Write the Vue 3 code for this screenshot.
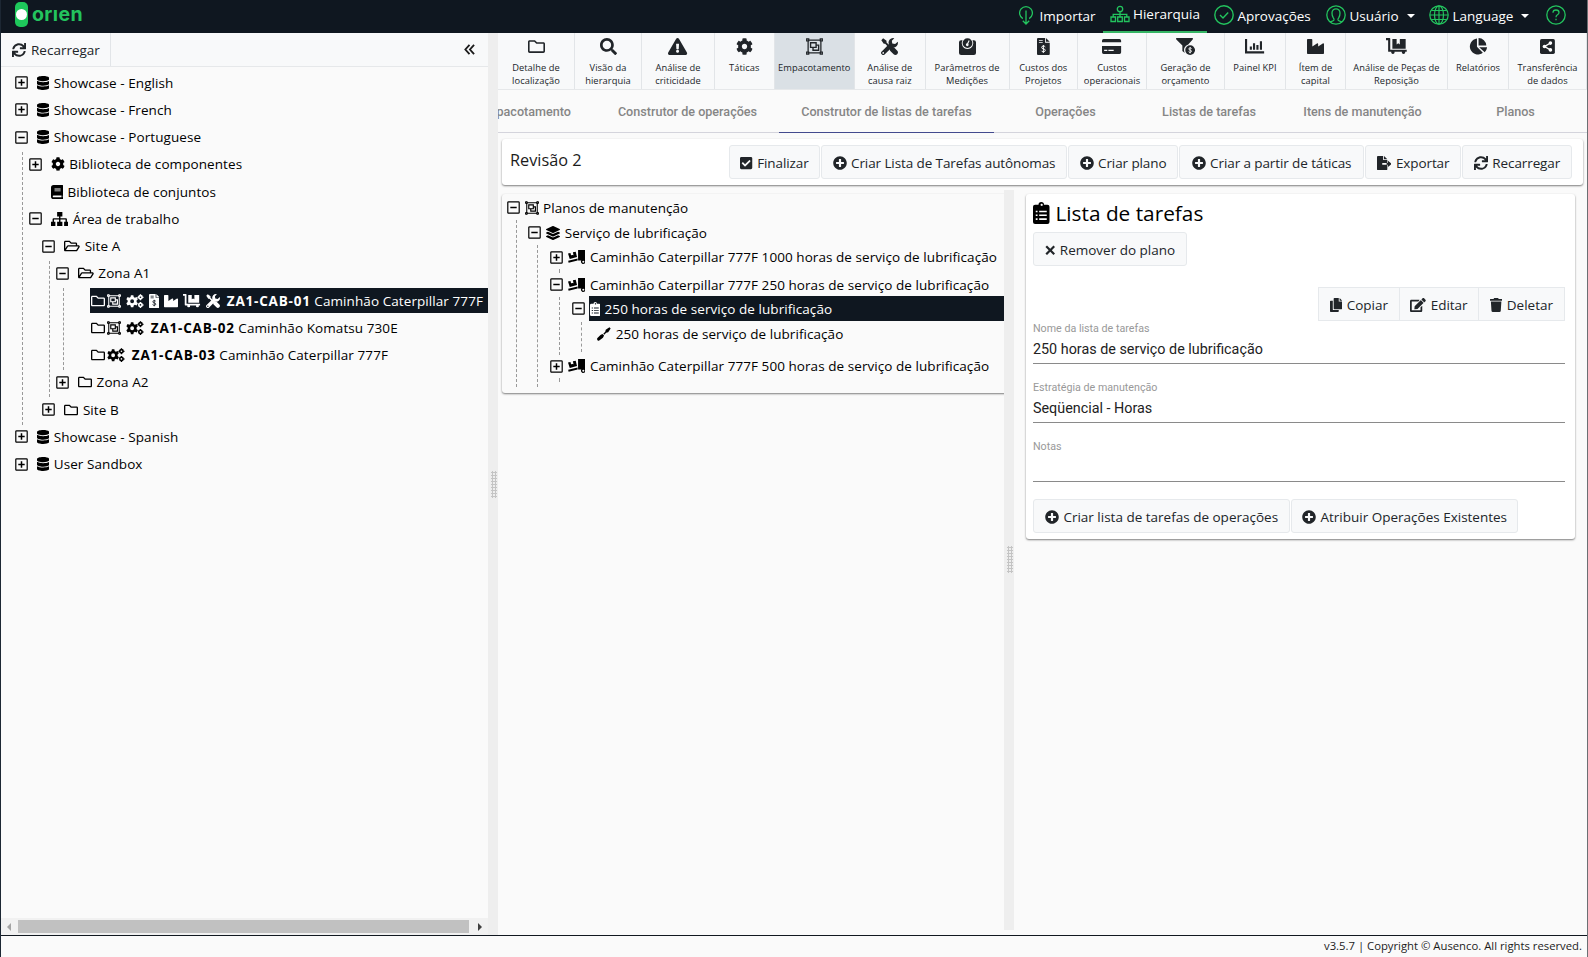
<script setup>
import { h, ref } from "vue"

// [width, height, markup] of every icon
const icons = {
  database: [448, 512, '<path d="M448 73.143v45.714C448 159.143 347.667 192 224 192S0 159.143 0 118.857V73.143C0 32.857 100.333 0 224 0s224 32.857 224 73.143zM448 176v102.857C448 319.143 347.667 352 224 352S0 319.143 0 278.857V176c48.125 33.143 136.208 48.572 224 48.572S399.874 209.143 448 176zm0 160v102.857C448 479.143 347.667 512 224 512S0 479.143 0 438.857V336c48.125 33.143 136.208 48.572 224 48.572S399.874 369.143 448 336z"/>'],
  plus: [512, 512, '<path d="M256 8C119 8 8 119 8 256s111 248 248 248 248-111 248-248S393 8 256 8zm144 276c0 6.6-5.4 12-12 12h-92v92c0 6.6-5.4 12-12 12h-56c-6.6 0-12-5.4-12-12v-92h-92c-6.6 0-12-5.4-12-12v-56c0-6.6 5.4-12 12-12h92v-92c0-6.6 5.4-12 12-12h56c6.6 0 12 5.4 12 12v92h92c6.6 0 12 5.4 12 12v56z"/>'],
  cog: [512, 512, '<path d="M487.4 315.7l-42.6-24.6c4.3-23.2 4.3-47 0-70.2l42.6-24.6c4.9-2.8 7.1-8.6 5.5-14-11.1-35.6-30-67.8-54.7-94.6-3.8-4.1-10-5.1-14.8-2.3L380.8 110c-17.9-15.4-38.5-27.3-60.8-35.1V25.8c0-5.6-3.9-10.5-9.4-11.7-36.7-8.2-74.3-7.8-109.2 0-5.5 1.2-9.4 6.1-9.4 11.7V75c-22.2 7.9-42.8 19.8-60.8 35.1L88.7 85.5c-4.9-2.8-11-1.9-14.8 2.3-24.7 26.7-43.6 58.9-54.7 94.6-1.7 5.4.6 11.2 5.5 14L67.3 221c-4.3 23.2-4.3 47 0 70.2l-42.6 24.6c-4.9 2.8-7.1 8.6-5.5 14 11.1 35.6 30 67.8 54.7 94.6 3.8 4.1 10 5.1 14.8 2.3l42.6-24.6c17.9 15.4 38.5 27.3 60.8 35.1v49.2c0 5.6 3.9 10.5 9.4 11.7 36.7 8.2 74.3 7.8 109.2 0 5.5-1.2 9.4-6.1 9.4-11.7v-49.2c22.2-7.9 42.8-19.8 60.8-35.1l42.6 24.6c4.9 2.8 11 1.9 14.8-2.3 24.7-26.7 43.6-58.9 54.7-94.6 1.5-5.5-.7-11.3-5.6-14.1zM256 336c-44.1 0-80-35.9-80-80s35.9-80 80-80 80 35.9 80 80-35.9 80-80 80z"/>'],
  cogs: [20, 16, '<path fill-rule="evenodd" d="M5.6 1.300h2.800l.4 2.200 1.300.7 2.100-.7 1.400 2.400-1.500 1.500v1.700l1.500 1.500-1.400 2.400-2.100-.7-1.300.7-.4 2.200H5.600l-.4-2.200-1.300-.7-2.100.7L.4 10.600l1.500-1.500V7.400L.4 5.900l1.400-2.400 2.100.7 1.300-.7zM7 6.100a2.200 2.200 0 1 0 0 4.400 2.200 2.200 0 0 0 0-4.400z"/><circle cx="16.500" cy="3.700" r="1.900" fill="none" stroke="currentColor" stroke-width="1.900"/><circle cx="16.500" cy="12.500" r="1.900" fill="none" stroke="currentColor" stroke-width="1.900"/><path d="M15.800.2h1.500v1.500h-1.500zM15.800 5.600h1.500v1.500h-1.500zM13 3h1.500v1.500H13zM18.500 3H20v1.500h-1.500zM15.800 9h1.500v1.500h-1.500zM15.800 14.400h1.500v1.500h-1.500zM18.500 11.800H20v1.500h-1.500z"/>'],
  book: [14, 16, '<path fill-rule="evenodd" d="M3 0h10q1 0 1 1v10.300q0 .5-.4.8-.3 1 0 1.900.4.200.4.700v.5q0 .8-.800.8H3q-3 0-3-3V3q0-3 3-3zM4 4v1h7V4zm0 2.200v1h7v-1zM3 12q-1 0-1 1t1 1h9v-2z"/>'],
  sitemap: [20, 16, '<path d="M7 0h6v5h-2.200v2H17q1.200 0 1.200 1.200V11H20v5h-5v-5h1.600V8.600h-5.800V11H13v5H7v-5h2.200V8.600H3.400V11H5v5H0v-5h1.800V8.200Q1.800 7 3 7h6.200V5H7z"/>'],
  folder: [512, 512, '<path d="M464 128H272l-54.63-54.63c-6-6-14.14-9.37-22.63-9.37H48C21.49 64 0 85.49 0 112v288c0 26.51 21.49 48 48 48h416c26.51 0 48-21.49 48-48V176c0-26.51-21.49-48-48-48zm0 272H48V112h140.12l54.63 54.63c6 6 14.14 9.37 22.63 9.37H464v224z"/>'],
  folderOpen: [576, 512, '<path fill-rule="evenodd" d="M527.9 224H480v-48c0-26.5-21.500-48-48-48H272l-64-64H48C21.500 64 0 85.500 0 112v288c0 26.500 21.500 48 48 48h400c16.500 0 31.900-8.500 40.700-22.600l79.900-128c20-31.900-3-73.400-40.700-73.400zM48 118c0-3.300 2.700-6 6-6h134.100l64 64H426c3.300 0 6 2.700 6 6v42H152c-16.800 0-32.400 8.800-41.100 23.200L48 351.400zm400 282H72l77.200-128H528z"/>'],
  group: [16, 16, '<g fill="none" stroke="currentColor"><path d="M2 2h12v12H2z" stroke-width="1.200"/><path d="M.6.8h2v2h-2zM13.400.8h2v2h-2zM.6 13.200h2v2h-2zM13.400 13.200h2v2h-2z" stroke-width="1.100"/><path d="M4.300 4.500h5.200v4.300H4.300z" stroke-width="1.300"/><path d="M9.500 6.700h2.400v4.800H6.600V8.800" stroke-width="1.300"/></g>'],
  search: [512, 512, '<path d="M505 442.7L405.3 343c-4.5-4.5-10.6-7-17-7H372c27.6-35.3 44-79.7 44-128C416 93.1 322.9 0 208 0S0 93.1 0 208s93.1 208 208 208c48.3 0 92.7-16.4 128-44v16.3c0 6.4 2.5 12.5 7 17l99.7 99.7c9.4 9.4 24.6 9.4 33.9 0l28.3-28.3c9.4-9.4 9.4-24.6.1-34zM208 336c-70.7 0-128-57.2-128-128 0-70.7 57.2-128 128-128 70.7 0 128 57.2 128 128 0 70.7-57.2 128-128 128z"/>'],
  warning: [576, 512, '<path d="M569.517 440.013C587.975 472.007 564.806 512 527.94 512H48.054c-36.937 0-59.999-40.055-41.577-71.987L246.423 23.985c18.467-32.009 64.72-31.951 83.154 0l239.94 416.028zM288 354c-25.405 0-46 20.595-46 46s20.595 46 46 46 46-20.595 46-46-20.595-46-46-46zm-43.673-165.346l7.418 136c.347 6.364 5.609 11.346 11.982 11.346h48.546c6.373 0 11.635-4.982 11.982-11.346l7.418-136c.375-6.874-5.098-12.654-11.982-12.654h-63.383c-6.884 0-12.356 5.78-11.981 12.654z"/>'],
  tools: [16, 16, '<path d="M.3 2 2 .3l3.200 2.400v1.500l2.900 2.900-1.300 1.300-2.900-2.900H2.600z"/><path d="M9.200 8.500c1-.6 2.400-.4 3.200.5l2.900 2.900q.7.700.7 1.600 0 1-.8 1.700-.7.700-1.700.7-.9 0-1.600-.7L9 12.400c-.9-.8-1.100-2.100-.6-3.200z"/><path fill-rule="evenodd" d="M15.800 3.500a4.300 4.300 0 0 1-5.400 5.200L3.600 15.400a1.900 1.900 0 0 1-2.900 0 1.900 1.900 0 0 1 0-2.800l6.700-6.700A4.300 4.300 0 0 1 12.500.2L10.200 2.600l.4 2.500 2.700.5zM2.100 13.200a.8.8 0 1 0 0 1.600.8.8 0 0 0 0-1.600z"/>'],
  weight: [16, 16, '<path fill-rule="evenodd" d="M2 2h1.300A5.500 5.500 0 0 0 8 10.300 5.500 5.500 0 0 0 12.700 2H14q2 0 2 2v10q0 2-2 2H2q-2 0-2-2V4q0-2 2-2z"/><path fill-rule="evenodd" d="M8 .2a4.600 4.600 0 1 1 0 9.200 4.600 4.600 0 0 1 0-9.200zm1.100 1.900L7.700 5a1.300 1.300 0 1 0 1 .4L10 2.500z"/>'],
  invoice: [12, 16, '<path fill-rule="evenodd" d="M1 0h6.600v4.400H12V15q0 1-1 1H1q-1 0-1-1V1q0-1 1-1zm.8 2v.8h3.600V2zm0 2v.8h3.600V4zM8.400 0 12 3.600H8.400z"/><path d="M7.800 8.400Q7.300 7.600 6 7.600q-1.600 0-1.600 1.200T6 10.200q1.800.2 1.800 1.400T6 13q-1.400 0-1.900-1M6 6.600v7.400" fill="none" class="cut" stroke-width=".9"/>'],
  card: [18, 16, '<path fill-rule="evenodd" d="M0 4V2.500Q0 1 1.500 1h15Q18 1 18 2.500V4zM0 7.500h18v6q0 1.500-1.500 1.500h-15Q0 15 0 13.500zM2 11v1.300h3V11zm4 0v1.300h5V11z"/>'],
  funnel: [18, 16, '<path d="M.5 0h15q.8.600.2 1.300L11.500 6A5.500 5.500 0 0 0 8.300 14L6 12.300V7L.3 1.300Q-.3.600.5 0z"/><path fill-rule="evenodd" d="M13.300 6.800a4.600 4.600 0 1 1 0 9.200 4.600 4.600 0 0 1 0-9.200z"/><path d="M14.700 10q-.4-.7-1.400-.7t-1.200.9 1.200 1.200 1.300 1.100-1.300 1-1.500-.7M13.300 8.500v6" fill="none" class="cut" stroke-width=".8"/>'],
  chart: [18, 16, '<path d="M0 1h2v11.500h16v2H0zM4.500 8h2v3h-2zM7.500 5h2v6h-2zM10.700 6.500h2v4.500h-2zM14 3h2v8h-2z"/>'],
  industry: [512, 512, '<path d="M475.115 163.781L336 252.309v-68.28c0-18.916-20.931-30.399-36.885-20.248L160 252.309V56c0-13.255-10.745-24-24-24H24C10.745 32 0 42.745 0 56v400c0 13.255 10.745 24 24 24h464c13.255 0 24-10.745 24-24V184.029c0-18.917-20.931-30.399-36.885-20.248z"/>'],
  dolly: [20, 16, '<path d="M0 0h3.400q.6 0 .6.600V11h15.500v2H18a1.600 1.600 0 1 1-3 0H8a1.600 1.600 0 1 1-3 0H2.600q-.6 0-.6-.6V2H0zM6 1h4v5l1.500-1L13 6V1h5.500v9H6z"/>'],
  pie: [17, 16, '<path d="M7.500.5V8.300l5.500 5.500A7.500 7.500 0 1 1 7.500.5zM9 0a7.500 7.500 0 0 1 7.300 7H9zM9.600 8.600H17a7.500 7.500 0 0 1-2.200 4.900z"/>'],
  share: [14, 16, '<path fill-rule="evenodd" d="M1.500 1h11Q14 1 14 2.500v11q0 1.500-1.500 1.500h-11Q0 15 0 13.500v-11Q0 1 1.500 1z"/><path d="M9.700 4.800 4.300 8l5.400 3.200" fill="none" class="cut" stroke-width="1.200"/><g class="hole"><circle cx="9.800" cy="4.800" r="1.700"/><circle cx="4.200" cy="8" r="1.700"/><circle cx="9.800" cy="11.200" r="1.700"/></g>'],
  check: [448, 512, '<path d="M400 480H48c-26.51 0-48-21.49-48-48V80c0-26.51 21.49-48 48-48h352c26.51 0 48 21.49 48 48v352c0 26.51-21.49 48-48 48zm-204.686-98.059l184-184c6.248-6.248 6.248-16.379 0-22.627l-22.627-22.627c-6.248-6.248-16.379-6.249-22.628 0L184 302.745l-70.059-70.059c-6.248-6.248-16.379-6.248-22.628 0l-22.627 22.627c-6.248 6.248-6.248 16.379 0 22.627l104 104c6.249 6.25 16.379 6.25 22.628.001z"/>'],
  sync: [512, 512, '<path d="M440.65 12.57l4 82.77A247.16 247.16 0 0 0 255.83 8C134.73 8 33.91 94.92 12.29 209.82A12 12 0 0 0 24.09 224h49.05a12 12 0 0 0 11.67-9.26 175.91 175.91 0 0 1 317-56.94l-101.46-4.86a12 12 0 0 0-12.57 12v47.41a12 12 0 0 0 12 12H500a12 12 0 0 0 12-12V12a12 12 0 0 0-12-12h-47.37a12 12 0 0 0-11.98 12.57zM255.83 432a175.61 175.61 0 0 1-146-77.8l101.8 4.87a12 12 0 0 0 12.57-12v-47.4a12 12 0 0 0-12-12H12a12 12 0 0 0-12 12V500a12 12 0 0 0 12 12h47.35a12 12 0 0 0 12-12.6l-4.15-82.57A247.17 247.17 0 0 0 255.83 504c121.11 0 221.93-86.92 243.55-201.82a12 12 0 0 0-11.8-14.18h-49.05a12 12 0 0 0-11.67 9.26A175.86 175.86 0 0 1 255.83 432z"/>'],
  export: [17, 16, '<path fill-rule="evenodd" d="M1 0h6v4.500h4.800V8H6v2h5.800v5q0 1-1 1H1q-1 0-1-1V1q0-1 1-1zM8 0l3.800 3.700H8zM12.500 5.500 17 9l-4.500 3.500V10H11V8h1.500z"/>'],
  layers: [512, 512, '<path d="M12.41 148.02l232.94 105.67c6.8 3.09 14.49 3.09 21.29 0l232.94-105.67c16.55-7.51 16.55-32.52 0-40.03L266.65 2.31a25.607 25.607 0 0 0-21.29 0L12.41 107.98c-16.55 7.51-16.55 32.53 0 40.04zm487.18 88.28l-58.09-26.33-161.64 73.27c-7.56 3.43-15.59 5.17-23.86 5.17s-16.29-1.74-23.86-5.17L70.51 209.97l-58.1 26.33c-16.55 7.5-16.55 32.5 0 40l232.94 105.59c6.8 3.08 14.49 3.08 21.29 0L499.59 276.3c16.55-7.5 16.55-32.5 0-40zm0 127.8l-57.87-26.23-161.86 73.37c-7.56 3.43-15.59 5.17-23.86 5.17s-16.29-1.74-23.86-5.17L70.29 337.87 12.41 364.1c-16.55 7.5-16.55 32.5 0 40l232.94 105.59c6.8 3.08 14.49 3.08 21.29 0L499.59 404.1c16.55-7.5 16.55-32.5 0-40z"/>'],
  truck: [20, 16, '<path fill-rule="evenodd" d="M11.500 0H20v13.500a2.600 2.600 0 1 1-4.800-1.500h-3.700zm6 12.300a1.200 1.200 0 1 0 0 2.400 1.200 1.200 0 0 0 0-2.400zM0 4l2.800-.7.700 2.800 1.600-.5 1.200.4-.7-3.400L8.800 2l1.500 6L2 10.200zM.2 12.200l10.800-2.600v2.300L.7 14.500z"/>'],
  clipboard: [12, 16, '<path fill-rule="evenodd" d="M10.500 2H8a2 2 0 0 0-4 0H1.500Q0 2 0 3.500v11Q0 16 1.500 16h9q1.500 0 1.500-1.500v-11Q12 2 10.500 2zM6 1.300a.8.8 0 1 1 0 1.500.8.8 0 0 1 0-1.500zM2 6.300v1.200h1.300V6.300zm2.500 0v1.100H10V6.300zM2 9v1.200h1.300V9zm2.500 0v1.100H10V9zM2 11.900v1.200h1.300v-1.200zm2.500 0V13H10v-1.100z"/>'],
  driver: [16, 16, '<path d="M15.600 1.800 14.200.4 10 3.200l-.6 2.300-2.200 2.200 1.100 1.100 2.200-2.200 2.300-.6zM6.200 7.900 4 9 .5 12.700q-.9 1.200.1 2.300 1.100 1.100 2.400.2L6.800 12.200l1.300-2.400z"/>'],
  times: [12, 16, '<path d="M2.300 2.800 6 6.500l3.700-3.700 1.800 1.800L7.800 8.300l3.700 3.700-1.800 1.800L6 10.100l-3.700 3.700L.5 12l3.700-3.700L.5 4.600z"/>'],
  copy: [14, 16, '<path d="M5 0h5v4h4v8q0 .8-.8.800H5q-.8 0-.8-.8V.8Q4.200 0 5 0zM11 0l3 3h-3zM.8 3h2.400v10q0 .8.800.8h6v1.400q0 .8-.8.800H.8Q0 16 0 15.200V3.800Q0 3 .8 3z"/>'],
  edit: [576, 512, '<path d="M402.6 83.2l90.2 90.2c3.8 3.8 3.8 10 0 13.8L274.4 405.6l-92.8 10.3c-12.4 1.4-22.9-9.1-21.5-21.5l10.3-92.8L388.8 83.2c3.8-3.8 10-3.8 13.8 0zm162-22.9l-48.8-48.8c-15.2-15.2-39.9-15.2-55.2 0l-35.4 35.4c-3.8 3.8-3.8 10 0 13.8l90.2 90.2c3.8 3.8 10 3.8 13.8 0l35.4-35.4c15.2-15.3 15.2-40 0-55.2zM384 346.2V448H64V128h229.8c3.2 0 6.2-1.3 8.5-3.5l40-40c7.6-7.6 2.2-20.5-8.5-20.5H48C21.5 64 0 85.5 0 112v352c0 26.5 21.5 48 48 48h352c26.5 0 48-21.5 48-48V306.2c0-10.7-12.9-16-20.5-8.5l-40 40c-2.2 2.3-3.500 5.300-3.500 8.500z"/>'],
  trash: [14, 16, '<path d="M.5 1H4l.8-1h4.400l.8 1h3.500q.5 0 .5.500V3H0V1.500Q0 1 .5 1zM1 4h12l-.7 10.600q-.1 1.400-1.500 1.400H3.200q-1.400 0-1.500-1.400z"/>'],
  angles: [12, 12, '<path d="M6 1 1.500 6 6 11M11 1 6.500 6 11 11" fill="none" stroke="currentColor" stroke-width="2"/>'],
  expand: [13, 13, '<g fill="none" stroke="currentColor"><rect x=".8" y=".8" width="11.400" height="11.400" rx=".8" stroke-width="1.200"/><path d="M3.300 6.500h6.400M6.500 3.300v6.400" stroke-width="1.500"/></g>'],
  collapse: [13, 13, '<g fill="none" stroke="currentColor"><rect x=".8" y=".8" width="11.400" height="11.400" rx=".8" stroke-width="1.200"/><path d="M3.300 6.500h6.400" stroke-width="1.500"/></g>'],
  navImport: [14, 20, '<path d="M3.800 13.600A6.400 6.400 0 1 1 10.200 13.600M7 5.500v13M3.800 15.800 7 19l3.200-3.200" fill="none" stroke="currentColor" stroke-width="1.300"/>'],
  navTree: [20, 18, '<g fill="none" stroke="currentColor" stroke-width="1.300"><circle cx="10" cy="4" r="2.700"/><path d="M1 12h4.500v4.500H1zM7.700 12h4.600v4.500H7.700zM14.500 12H19v4.500h-4.500zM10 6.700V12M3.200 12V9.300h13.600V12"/></g>'],
  navCheck: [20, 20, '<g fill="none" stroke="currentColor" stroke-width="1.400"><circle cx="10" cy="10" r="9.200"/><path d="m6 10 3 3 5.200-5.500"/></g>'],
  navUser: [20, 20, '<g fill="none" stroke="currentColor" stroke-width="1.300"><circle cx="10" cy="10" r="9.200"/><path d="M4 16.800q3.500-.6 4-1.800.2-1-.8-2.300Q6 11 6 8a4 4.200 0 0 1 8 0q0 3-1.200 4.700-1 1.300-.8 2.300.5 1.200 4 1.800"/></g>'],
  navGlobe: [20, 20, '<g fill="none" stroke="currentColor" stroke-width="1.200"><circle cx="10" cy="10" r="9.200"/><ellipse cx="10" cy="10" rx="4.500" ry="9.200"/><path d="M10 1v18M1 10h18M2.500 5.500h15M2.500 14.500h15"/></g>'],
  navHelp: [20, 20, '<g fill="none" stroke="currentColor" stroke-width="1.300"><circle cx="10" cy="10" r="9.200"/><path d="M7 7.800Q7 5 10 5t3 2.600q0 1.300-1.500 2.200T10 12.200M10 13.800v1.500"/></g>'],
}

const Icon = (props) => {
  const [w, hgt, body] = icons[props.name]
  return h("svg", {
    viewBox: `0 0 ${w} ${hgt}`,
    height: props.size,
    width: (props.size * w) / hgt,
    fill: "currentColor",
    innerHTML: body,
  })
}
Icon.props = ["name", "size"]

const nav = [
  { icon: "navImport", text: "Importar" },
  { icon: "navTree", text: "Hierarquia", active: true },
  { icon: "navCheck", text: "Aprovações" },
  { icon: "navUser", text: "Usuário", caret: true },
  { icon: "navGlobe", text: "Language", caret: true },
  { icon: "navHelp" },
]

const modules = [
  { icon: "folder", lines: ["Detalhe de", "localização"] },
  { icon: "search", lines: ["Visão da", "hierarquia"] },
  { icon: "warning", lines: ["Análise de", "criticidade"] },
  { icon: "cog", lines: ["Táticas"] },
  { icon: "group", lines: ["Empacotamento"] },
  { icon: "tools", lines: ["Análise de", "causa raiz"] },
  { icon: "weight", lines: ["Parâmetros de", "Medições"] },
  { icon: "invoice", lines: ["Custos dos", "Projetos"] },
  { icon: "card", lines: ["Custos", "operacionais"] },
  { icon: "funnel", lines: ["Geração de", "orçamento"] },
  { icon: "chart", lines: ["Painel KPI"] },
  { icon: "industry", lines: ["Ítem de", "capital"] },
  { icon: "dolly", lines: ["Análise de Peças de", "Reposição"] },
  { icon: "pie", lines: ["Relatórios"] },
  { icon: "share", lines: ["Transferência", "de dados"] },
]
const activeModule = ref("Empacotamento")

const tabs = [
  "pacotamento",
  "Construtor de operações",
  "Construtor de listas de tarefas",
  "Operações",
  "Listas de tarefas",
  "Itens de manutenção",
  "Planos",
]
const activeTab = ref(2)

const actions = [
  { icon: "check", text: "Finalizar" },
  { icon: "plus", text: "Criar Lista de Tarefas autônomas" },
  { icon: "plus", text: "Criar plano" },
  { icon: "plus", text: "Criar a partir de táticas" },
  { icon: "export", text: "Exportar" },
  { icon: "sync", text: "Recarregar" },
]

const sideTree = [
  { level: 0, box: "expand", icons: ["database"], text: "Showcase - English" },
  { level: 0, box: "expand", icons: ["database"], text: "Showcase - French" },
  { level: 0, box: "collapse", icons: ["database"], text: "Showcase - Portuguese" },
  { level: 1, box: "expand", icons: ["cog"], text: "Biblioteca de componentes" },
  { level: 1, icons: ["book"], text: "Biblioteca de conjuntos" },
  { level: 1, box: "collapse", icons: ["sitemap"], text: "Área de trabalho" },
  { level: 2, box: "collapse", icons: ["folderOpen"], text: "Site A" },
  { level: 3, box: "collapse", icons: ["folderOpen"], text: "Zona A1" },
  { level: 4, icons: ["folder", "group", "cogs", "invoice", "industry", "dolly", "tools"], code: "ZA1-CAB-01", text: "Caminhão Caterpillar 777F", selected: true },
  { level: 4, icons: ["folder", "group", "cogs"], code: "ZA1-CAB-02", text: "Caminhão Komatsu 730E" },
  { level: 4, icons: ["folder", "cogs"], code: "ZA1-CAB-03", text: "Caminhão Caterpillar 777F" },
  { level: 3, box: "expand", icons: ["folder"], text: "Zona A2" },
  { level: 2, box: "expand", icons: ["folder"], text: "Site B" },
  { level: 0, box: "expand", icons: ["database"], text: "Showcase - Spanish" },
  { level: 0, box: "expand", icons: ["database"], text: "User Sandbox" },
]
// dashed connectors: [left, top, height] inside the tree
const sideGuides = [[21, 85, 273], [48, 194, 136], [62, 221, 82]]

const planTree = [
  { level: 0, box: "collapse", icon: "group", text: "Planos de manutenção", height: 25 },
  { level: 1, box: "collapse", icon: "layers", text: "Serviço de lubrificação", height: 24.5 },
  { level: 2, box: "expand", icon: "truck", text: "Caminhão Caterpillar 777F 1000 horas de serviço de lubrificação", height: 27.5 },
  { level: 2, box: "collapse", icon: "truck", text: "Caminhão Caterpillar 777F 250 horas de serviço de lubrificação", height: 24 },
  { level: 3, box: "collapse", icon: "clipboard", text: "250 horas de serviço de lubrificação", height: 25, selected: true },
  { level: 4, icon: "driver", text: "250 horas de serviço de lubrificação", height: 32.5 },
  { level: 2, box: "expand", icon: "truck", text: "Caminhão Caterpillar 777F 500 horas de serviço de lubrificação", height: 39 },
]
const planGuides = [[14, 26, 167], [35, 51, 142], [57, 75, 4], [57, 103, 58], [57, 184, 4], [79, 128, 30]]

const fields = [
  { label: "Nome da lista de tarefas", value: "250 horas de serviço de lubrificação" },
  { label: "Estratégia de manutenção", value: "Seqüencial - Horas" },
  { label: "Notas", value: "" },
]
</script>

<template>
  <div class="app">
    <header class="topbar">
      <div class="logo">
        <svg width="13" height="25" viewBox="0 0 13 25">
          <rect width="13" height="25" rx="5" fill="#1ec95b" />
          <circle cx="6.500" cy="12.500" r="5.500" fill="#fff" />
        </svg>
        <span>orıen</span>
      </div>
      <nav class="nav">
        <a v-for="item in nav" :key="item.icon" class="nav-item" :class="{ active: item.active }">
          <Icon :name="item.icon" :size="item.active ? 18 : 20" class="nav-icon" />
          <span v-if="item.text">{{ item.text }}</span>
          <i v-if="item.caret" class="caret"></i>
        </a>
      </nav>
    </header>

    <div class="body">
      <aside class="sidebar">
        <div class="side-head">
          <button class="reload"><Icon name="sync" :size="14" />Recarregar</button>
          <Icon name="angles" :size="11" class="hide" />
        </div>
        <div class="side-tree">
          <div
            v-for="row in sideTree"
            :key="row.code || row.text"
            class="side-row"
            :style="{ paddingLeft: 14 + row.level * 13.7 + 'px' }"
          >
            <Icon v-if="row.box" :name="row.box" :size="13" class="box" />
            <span v-else-if="row.level < 4" class="box-space"></span>
            <span v-else class="leaf-space"></span>
            <span class="node" :class="{ selected: row.selected, leaf: row.code }">
              <Icon v-for="i in row.icons" :key="i" :name="i" :size="14" :class="'i-' + i" />
              <span class="label"><b v-if="row.code">{{ row.code }}</b> {{ row.text }}</span>
            </span>
          </div>
          <i
            v-for="g in sideGuides"
            :key="g[0]"
            class="guide"
            :style="{ left: g[0] + 'px', top: g[1] + 'px', height: g[2] + 'px' }"
          ></i>
        </div>
        <div class="scrollbar"><i class="arrow left"></i><i class="thumb"></i><i class="arrow right"></i></div>
      </aside>

      <div class="gutter first"><i class="grip"></i></div>

      <main class="main">
        <div class="modules">
          <button
            v-for="m in modules"
            :key="m.icon"
            class="module"
            :class="{ active: m.lines[0] === activeModule }"
          >
            <Icon :name="m.icon" :size="17" />
            <span v-for="line in m.lines" :key="line">{{ line }}</span>
          </button>
        </div>

        <div class="tabs">
          <a v-for="(t, i) in tabs" :key="t" class="tab" :class="{ active: i === activeTab }">{{ t }}</a>
        </div>

        <section class="card revision">
          <h2>Revisão 2</h2>
          <div class="actions">
            <button v-for="a in actions" :key="a.text" class="btn">
              <Icon :name="a.icon" :size="14" /><span>{{ a.text }}</span>
            </button>
          </div>
        </section>

        <div class="split">
          <div class="plan-col">
            <div class="plan-tree">
              <div
                v-for="(row, i) in planTree"
                :key="i"
                class="plan-row"
                :style="{ paddingLeft: 4.5 + row.level * 21.7 + 'px', height: row.height + 'px' }"
              >
                <Icon v-if="row.box" :name="row.box" :size="13" class="box" />
                <span class="plan-node" :class="[{ selected: row.selected }, 'n-' + row.icon]">
                  <Icon :name="row.icon" :size="14" />
                  <span class="label">{{ row.text }}</span>
                </span>
              </div>
              <i
                v-for="(g, i) in planGuides"
                :key="i"
                class="guide"
                :style="{ left: g[0] + 'px', top: g[1] + 'px', height: g[2] + 'px' }"
              ></i>
            </div>
          </div>

          <div class="gutter second"><i class="grip"></i></div>

          <section class="card detail">
            <h1><Icon name="clipboard" :size="22" />Lista de tarefas</h1>
            <div class="remove"><button class="btn"><Icon name="times" :size="14" /><span>Remover do plano</span></button></div>
            <div class="edit-group">
              <button class="btn"><Icon name="copy" :size="14" /><span>Copiar</span></button>
              <button class="btn"><Icon name="edit" :size="14" /><span>Editar</span></button>
              <button class="btn"><Icon name="trash" :size="14" /><span>Deletar</span></button>
            </div>
            <div v-for="f in fields" :key="f.label" class="field">
              <label>{{ f.label }}</label>
              <div class="value">{{ f.value }}</div>
            </div>
            <div class="bottom-actions">
              <button class="btn"><Icon name="plus" :size="14" /><span>Criar lista de tarefas de operações</span></button>
              <button class="btn"><Icon name="plus" :size="14" /><span>Atribuir Operações Existentes</span></button>
            </div>
          </section>
        </div>
      </main>
    </div>

    <footer class="footer">v3.5.7 | Copyright © Ausenco. All rights reserved.</footer>
  </div>
</template>

<style>
body {
  margin: 0;
  background: #fafafa;
}
svg .cut {
  stroke: #fff;
}
svg .hole {
  fill: #fff;
}
.selected svg .cut {
  stroke: #0f1720;
}
</style>

<style scoped>
* {
  box-sizing: border-box;
}
.app {
  width: 1588px;
  height: 957px;
  display: flex;
  flex-direction: column;
  overflow: hidden;
  background: #fafafa;
  border-left: 1px solid #1c2733;
  border-right: 1px solid #6b6f73;
  color: #1c1c1c;
  font-family: "Segoe UI", "Open Sans", "Noto Sans", sans-serif;
  font-size: 13.5px;
}
svg {
  flex: none;
  display: block;
}
button {
  font: inherit;
  color: #212529;
  margin: 0;
}

/* top bar */
.topbar {
  height: 33px;
  flex: none;
  display: flex;
  justify-content: space-between;
  background: #0f1720;
  padding-left: 14px;
}
.logo {
  display: flex;
  gap: 4px;
  padding-top: 2px;
  color: #23c45e;
  font-family: "Inter", sans-serif;
  font-weight: 700;
  font-size: 19.500px;
  letter-spacing: 0.4px;
  line-height: 24px;
}
.nav {
  display: grid;
  grid-template-columns: 84px 111px 112px 103px 117px 41.500px;
  color: #fff;
  font-size: 13.5px;
}
.nav-item {
  display: flex;
  align-items: center;
  height: 33px;
  padding-bottom: 2px;
  white-space: nowrap;
}
.nav-item .nav-icon {
  margin-right: 4px;
  margin-top: -1px;
  color: #23c45e;
}
.nav-item:first-child .nav-icon {
  margin-right: 7px;
}
.nav-item.active {
  width: 104px;
  padding: 0 0 3px 7px;
  border-bottom: 2px solid #35b564;
}
.nav-item.active .nav-icon {
  margin-right: 3.500px;
}
.caret {
  margin-left: 8px;
  border: 4.500px solid transparent;
  border-top-color: #fff;
  border-bottom: 0;
}

/* layout */
.body {
  height: 902px;
  flex: none;
  display: flex;
}
.sidebar {
  width: 487px;
  flex: none;
  display: flex;
  flex-direction: column;
}
.gutter {
  width: 10px;
  flex: none;
  background: #eee;
  display: flex;
  justify-content: center;
}
.grip {
  width: 6px;
  height: 27px;
  margin-left: 1px;
  background-image: radial-gradient(circle, #c4c4c4 1px, transparent 1.200px);
  background-size: 3px 3px;
}
.first .grip {
  margin-top: 438px;
}
.second {
  height: 740px;
}
.second .grip {
  margin-top: 356px;
}
.main {
  width: 1089px;
  display: flex;
  flex-direction: column;
  overflow: hidden;
}

/* sidebar */
.side-head {
  height: 34px;
  flex: none;
  display: flex;
  align-items: center;
  justify-content: space-between;
  background: #f8f9fa;
  border-bottom: 1px solid #e6e8ea;
  padding-right: 13px;
}
.reload {
  width: 110px;
  height: 33px;
  display: flex;
  align-items: center;
  gap: 5px;
  padding: 0 0 0 11px;
  border: 0;
  border-right: 1px solid #e2e5e8;
  background: none;
}
.side-tree {
  position: relative;
  flex: 1;
  padding-top: 2px;
}
.side-row {
  height: 27.250px;
  display: flex;
  align-items: center;
  white-space: nowrap;
  letter-spacing: 0.08px;
}
.side-row b {
  letter-spacing: 0.8px;
}
.box {
  color: #000;
  margin-right: 9px;
}
.box-space {
  width: 22px;
}
.leaf-space {
  width: 20.500px;
}
.node {
  display: flex;
  align-items: center;
  height: 25px;
  gap: 4.500px;
  color: #000;
}
.leaf {
  flex: 1;
  gap: 5px;
  padding-left: 1px;
}
.leaf .i-folder {
  margin-right: -3px;
}
.leaf .label {
  margin-left: 2px;
}
.selected {
  background: #0f1720;
  color: #fff;
}
.guide {
  position: absolute;
  width: 0;
  border-left: 1px dashed #999;
}
.scrollbar {
  height: 17px;
  display: flex;
  align-items: center;
  background: #f1f1f1;
  padding: 0 6px;
}
.thumb {
  width: 451px;
  height: 13px;
  margin: 0 9px 0 7px;
  background: #c1c1c1;
}
.arrow {
  border: 4px solid transparent;
}
.arrow.left {
  border-right-color: #a3a3a3;
  border-left: 0;
}
.arrow.right {
  border-left-color: #404040;
  border-right: 0;
}

/* module toolbar */
.modules {
  height: 57px;
  flex: none;
  display: grid;
  grid-template-columns: 77px 67px 73px 59.500px 80.500px 70.500px 84px 68.500px 69px 78px 61px 60px 102px 61px 78px;
  background: #f8f9fa;
  border-bottom: 1px solid #e6e8ea;
}
.module {
  display: flex;
  flex-direction: column;
  align-items: center;
  padding: 5px 0 0;
  border: 0;
  border-right: 1px solid #e2e5e8;
  background: none;
  font-size: 9.300px;
  letter-spacing: 0.07px;
  line-height: 13px;
  white-space: nowrap;
}
.module svg {
  margin-bottom: 6px;
}
.module.active {
  background: #dae0e5;
}

/* tabs */
.tabs {
  height: 43px;
  flex: none;
  display: grid;
  grid-template-columns: 98px 183px 215px 143px 144px 163px 143px;
  border-bottom: 1px solid #d4d4dc;
  font-family: "Roboto", sans-serif;
  font-size: 12.600px;
  font-weight: 500;
  color: #868686;
}
.tab {
  height: 43px;
  display: flex;
  align-items: center;
  justify-content: center;
  white-space: nowrap;
}
.tab:first-child {
  justify-content: flex-end;
  padding-right: 25px;
}
.tab.active {
  border-bottom: 1.500px solid #434a8e;
}

/* cards and buttons */
.card {
  background: #fff;
  border-radius: 3px;
  box-shadow: 0 1px 2px rgba(0, 0, 0, 0.5);
}
.revision {
  width: 1081px;
  height: 46px;
  flex: none;
  margin: 6px 0 5px 4px;
  padding-right: 11px;
  display: flex;
  justify-content: space-between;
  align-items: center;
}
.revision h2 {
  margin: -5px 0 0 8px;
  font-size: 16.300px;
  font-weight: 400;
}
.actions {
  display: grid;
  grid-template-columns: 91px 246px 110px 185px 96px 110px;
  gap: 1px;
  letter-spacing: -0.1px;
}
.btn {
  height: 34px;
  display: inline-flex;
  align-items: center;
  justify-content: center;
  gap: 4.500px;
  padding: 1px 0 0;
  border: 1px solid #e6e9ec;
  border-radius: 3px;
  background: #f8f9fa;
  white-space: nowrap;
  letter-spacing: inherit;
}

/* plan tree */
.split {
  display: flex;
}
.plan-col {
  width: 506px;
  padding: 4px 0 0 4px;
  overflow: hidden;
}
.plan-tree {
  position: relative;
  height: 199px;
  width: 520px;
  padding: 1px 18px 0 0;
  box-shadow: 0 1px 2px rgba(0, 0, 0, 0.5);
  border-radius: 3px;
  background: #fafafa;
}
.plan-row {
  display: flex;
  white-space: nowrap;
  letter-spacing: 0.06px;
}
.plan-row .box {
  margin: 6px 4px 0 0;
}
.plan-node {
  height: 25px;
  display: flex;
  align-items: center;
  gap: 4.500px;
  padding-left: 1px;
  color: #000;
}
.plan-node.selected {
  flex: 1;
  color: #fff;
}
.n-driver {
  padding-left: 4px;
}

/* detail */
.detail {
  width: 549px;
  height: 345px;
  margin: 4px 0 0 12px;
  padding: 6px 10px 0 7px;
}
.detail h1 {
  height: 26px;
  margin: 0 0 6px;
  display: flex;
  align-items: center;
  gap: 6px;
  font-size: 20.800px;
  font-weight: 500;
  color: #000;
}
.remove {
  display: flex;
}
.remove .btn {
  width: 154px;
}
.edit-group {
  display: grid;
  grid-template-columns: 82px 79px 86px;
  justify-content: end;
  margin: 21px 0 0;
}
.edit-group .btn {
  border-radius: 0;
}
.edit-group .btn + .btn {
  border-left: 0;
}
.field {
  height: 58.800px;
  font-family: "Roboto", sans-serif;
}
.field label {
  display: block;
  padding-top: 1px;
  font-size: 10.700px;
  line-height: 13px;
  color: #999;
}
.field .value {
  height: 29px;
  border-bottom: 1px solid #8a8a8a;
  font-size: 14.350px;
  line-height: 29px;
  color: #222;
}
.bottom-actions {
  display: grid;
  grid-template-columns: 257px 227px;
  gap: 1px;
  padding-top: 2px;
}

.footer {
  flex: 1;
  border-top: 1px solid #111820;
  padding-right: 5px;
  text-align: right;
  font-size: 11.300px;
  line-height: 20px;
}
</style>
